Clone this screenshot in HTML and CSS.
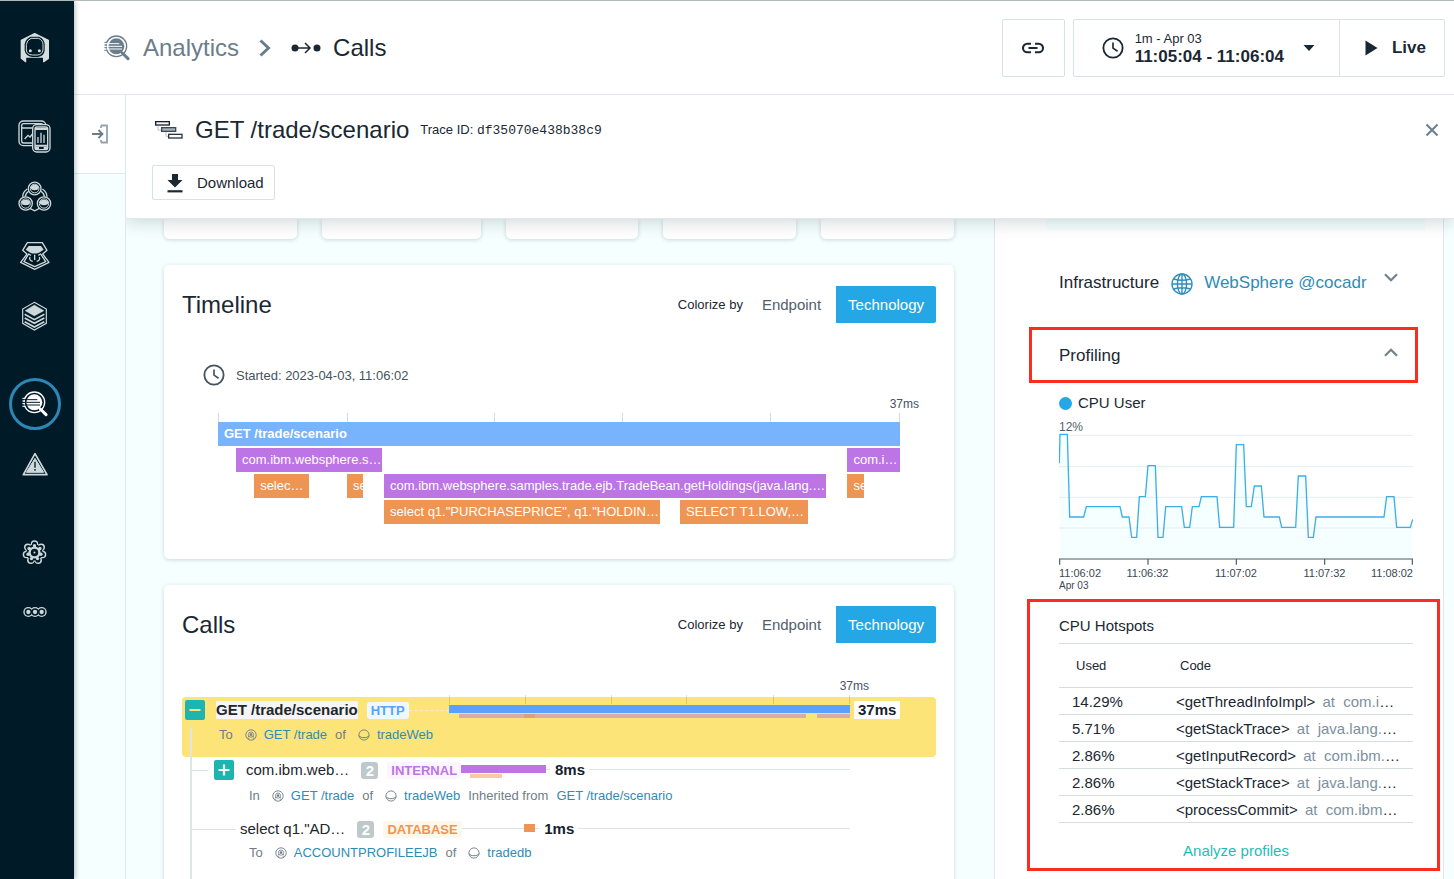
FILE: index.html
```html
<!DOCTYPE html>
<html lang="en">
<head>
<meta charset="utf-8">
<title>Analytics - Calls</title>
<link rel="stylesheet" href="styles.css">
</head>
<body>
<svg class="defs" width="0" height="0" aria-hidden="true">
  <symbol id="i-analytics" viewBox="0 0 78 78">
    <circle cx="37" cy="34" r="31" fill="none" stroke="currentColor" stroke-width="4"/>
    <circle cx="37" cy="34" r="24" fill="currentColor"/>
    <path d="M55 54 72 71" stroke="currentColor" stroke-width="9" stroke-linecap="round"/>
    <path class="cut" d="M0 26H46M0 34H54M0 42H54" fill="none" stroke-width="3"/>
    <path d="M1 22H10M1 30H9M1 38H9M1 46H10" stroke="currentColor" stroke-width="3"/>
  </symbol>
  <symbol id="i-clock" viewBox="0 0 24 24">
    <circle cx="12" cy="12" r="10.5" fill="none" stroke="currentColor" stroke-width="2"/>
    <path d="M12 6v6.2l5 3.4" fill="none" stroke="currentColor" stroke-width="1.8"/>
  </symbol>
  <symbol id="i-endpoint" viewBox="0 0 12 12">
    <circle cx="6" cy="6" r="5.2" fill="none" stroke="currentColor" stroke-width=".9"/>
    <circle cx="6" cy="5.6" r="2.6" fill="none" stroke="currentColor" stroke-width=".8"/>
    <circle cx="6" cy="5.6" r="1.3" fill="currentColor"/>
    <path d="M2.2 9.2h2.2M7.6 9.2h2.2M3 7.8l1.2-.7M9 7.8l-1.2-.7" stroke="currentColor" stroke-width=".8"/>
  </symbol>
  <symbol id="i-service" viewBox="0 0 12 12">
    <circle cx="6" cy="6" r="5.1" fill="none" stroke="currentColor" stroke-width=".9"/>
    <path d="M.9 6.6C2.4 9.4 9.6 9.4 11.1 6.6" fill="none" stroke="currentColor" stroke-width="1"/>
  </symbol>
</svg>

<div class="app">
  <nav class="sidebar" aria-label="Main">
    <a class="logo" href="#" aria-label="Home">
      <svg width="30" height="32" viewBox="60 97 90 96">
        <path d="M104 102 145 122V176L131 186V172H77V186L64 176V122Z" fill="currentColor" stroke="currentColor" stroke-width="4" stroke-linejoin="round"/>
        <path d="M80 175H129V192H80Z" fill="#001a27"/>
        <path d="M92 111H117Q133 118 134 134V152Q132 170 114 172H96Q77 170 74 152V134Q76 118 92 111Z" fill="#001a27"/>
        <path d="M93 116H116Q129 122 129 135V151Q127 165 112 166H97Q80 165 79 151V135Q80 122 93 116Z" fill="none" stroke="currentColor" stroke-width="3"/>
        <circle cx="91" cy="153" r="4.5" fill="currentColor"/><circle cx="118" cy="153" r="4.5" fill="currentColor"/>
      </svg>
    </a>
    <div class="nav-group">
      <a class="nav-item" href="#" aria-label="Websites and mobile apps">
        <svg width="33" height="33" viewBox="56 359 99 99" fill="none" stroke="currentColor">
          <rect x="59" y="362" width="80" height="74" rx="13" stroke-width="4"/>
          <rect x="67" y="370" width="64" height="58" rx="6" stroke-width="4"/>
          <path d="M66 383H104M76 416 86 405 92 410 102 398" stroke-width="4"/>
          <rect x="100" y="373" width="52" height="82" rx="12" fill="#001a27" stroke-width="4"/>
          <rect x="107" y="380" width="38" height="68" rx="6" stroke-width="4"/>
          <path d="M107 386H145M107 436H145M107 443H119M133 443H145" stroke-width="6"/>
          <path d="M116 428V410M125 428V397M134 428V403" stroke-width="4"/>
        </svg>
      </a>
      <a class="nav-item" href="#" aria-label="Applications">
        <svg width="34" height="31" viewBox="54 539 102 92" fill="none" stroke="currentColor">
          <path d="M84 566Q72 574 72 586M125 566Q137 574 137 586" stroke-width="12"/>
          <path d="M84 566Q72 574 72 586M125 566Q137 574 137 586" stroke="#001a27" stroke-width="4"/>
          <path d="M88 620 104 628 120 620" stroke-width="4"/>
          <g fill="#001a27" stroke-width="4"><circle cx="104" cy="561" r="19"/><circle cx="77" cy="606" r="20"/><circle cx="132" cy="606" r="20"/></g>
          <g stroke-width="3"><circle cx="104" cy="561" r="13"/><circle cx="77" cy="606" r="14"/><circle cx="132" cy="606" r="14"/></g>
          <g fill="currentColor" stroke="none"><ellipse cx="104" cy="558" rx="12" ry="8"/><ellipse cx="77" cy="603" rx="13" ry="8"/><ellipse cx="132" cy="603" rx="13" ry="8"/></g>
        </svg>
      </a>
      <a class="nav-item" href="#" aria-label="Platforms">
        <svg width="32" height="30" viewBox="57 726 96 90" fill="none" stroke="currentColor" stroke-linejoin="round">
          <path d="M82 731H127L141 754 128 765 147 790 104 811 62 790 81 765 68 754Z" stroke-width="4"/>
          <path d="M86 741H123L131 752 117 761Q104 766 91 761L77 752Z" fill="currentColor" stroke="none"/>
          <path d="M93 769 86 765 72 788 104 803 137 788 122 765 115 769" stroke-width="4"/>
          <path d="M104 767V783M90 774Q86 784 98 787M118 774Q122 784 110 787" stroke-width="4"/>
        </svg>
      </a>
      <a class="nav-item" href="#" aria-label="Infrastructure">
        <svg width="27" height="30" viewBox="64 908 81 90" fill="none" stroke="currentColor">
          <path d="M104 912 140 932V975L104 995 69 975V932Z" stroke-width="3.5"/>
          <path d="M104 920 133 937 104 953 76 937Z" fill="currentColor"/>
          <path d="M75 948 104 964 134 948M75 959 104 975 134 959M75 970 104 986 134 970" stroke-width="5"/>
        </svg>
      </a>
    </div>
    <div class="nav-group">
      <a class="nav-item nav-item--active" href="#" aria-label="Analytics" aria-current="page">
        <span class="ring"><svg class="glyph" width="26" height="26"><use href="#i-analytics"/></svg></span>
      </a>
      <a class="nav-item" href="#" aria-label="Events">
        <svg width="26" height="24" viewBox="65 333 78 72">
          <path d="M104 338 140 401H69Z" fill="none" stroke="currentColor" stroke-width="5" stroke-linejoin="round"/>
          <path d="M104 352 130 394H78Z" fill="currentColor" stroke="currentColor" stroke-width="3" stroke-linejoin="round"/>
          <path d="M104 362V380M104 384V389" stroke="#001a27" stroke-width="4"/>
        </svg>
      </a>
    </div>
    <div class="nav-group">
      <a class="nav-item" href="#" aria-label="Settings">
        <svg width="25" height="25" viewBox="-37 -37 74 74">
          <g fill="currentColor">
            <circle r="27"/><circle cy="-25" r="11"/><circle cx="20" cy="-16" r="11"/><circle cx="24" cy="6" r="11"/><circle cx="11" cy="23" r="11"/><circle cx="-11" cy="23" r="11"/><circle cx="-24" cy="6" r="11"/><circle cx="-20" cy="-16" r="11"/>
          </g>
          <g fill="#001a27">
            <circle r="24"/><circle cy="-24" r="7.5"/><circle cx="19" cy="-15" r="7.5"/><circle cx="23" cy="6" r="7.5"/><circle cx="10" cy="22" r="7.5"/><circle cx="-10" cy="22" r="7.5"/><circle cx="-23" cy="6" r="7.5"/><circle cx="-19" cy="-15" r="7.5"/>
          </g>
          <g fill="currentColor">
            <circle r="18"/><circle cy="-20" r="5"/><circle cx="16" cy="-12" r="5"/><circle cx="19" cy="5" r="5"/><circle cx="9" cy="18" r="5"/><circle cx="-9" cy="18" r="5"/><circle cx="-19" cy="5" r="5"/><circle cx="-16" cy="-12" r="5"/>
          </g>
          <circle r="11" fill="#001a27"/><circle r="3" fill="currentColor"/>
        </svg>
      </a>
      <a class="nav-item" href="#" aria-label="More">
        <svg width="24" height="12" viewBox="0 0 72 36">
          <g fill="currentColor"><circle cx="16" cy="18" r="15"/><circle cx="36" cy="18" r="15"/><circle cx="56" cy="18" r="15"/></g>
          <g fill="#001a27"><circle cx="16" cy="18" r="11"/><circle cx="36" cy="18" r="11"/><circle cx="56" cy="18" r="11"/></g>
          <g fill="currentColor"><circle cx="16" cy="18" r="6.5"/><circle cx="36" cy="18" r="6.5"/><circle cx="56" cy="18" r="6.5"/></g>
        </svg>
      </a>
    </div>
  </nav>

  <div class="main">
    <header class="topbar">
      <nav class="crumbs" aria-label="Breadcrumb">
        <a class="crumb" href="#"><svg class="glyph" width="26" height="26"><use href="#i-analytics"/></svg>Analytics</a>
        <svg class="crumb-sep" width="14" height="18" viewBox="0 0 14 18"><path d="M2.5 1.5 10.5 9 2.5 16.5" fill="none" stroke="currentColor" stroke-width="3"/></svg>
        <span class="crumb crumb--current">
          <svg width="30" height="12" viewBox="0 0 30 12"><circle cx="4" cy="6" r="3.5" fill="currentColor"/><circle cx="26" cy="6" r="3.5" fill="currentColor"/><path d="M6 6H19M14 1 19 6 14 11" fill="none" stroke="currentColor" stroke-width="1.5"/></svg>
          Calls
        </span>
      </nav>
      <div class="controls">
        <button class="box-btn box-btn--link" type="button" aria-label="Copy link">
          <svg width="24" height="12" viewBox="0 0 24 12"><path d="M10 1.7H6.3a4.3 4.3 0 0 0 0 8.6H10M14 1.7h3.7a4.3 4.3 0 0 1 0 8.6H14M7.5 6h9" fill="none" stroke="currentColor" stroke-width="2.1"/></svg>
        </button>
        <div class="time">
          <button class="time-range" type="button">
            <svg width="22" height="22"><use href="#i-clock"/></svg>
            <span class="time-text"><span class="time-sub">1m - Apr 03</span><strong>11:05:04 - 11:06:04</strong></span>
            <svg width="12" height="6" viewBox="0 0 12 6"><path d="M.5 0h11L6 6z" fill="currentColor"/></svg>
          </button>
          <button class="live" type="button">
            <svg width="13" height="16" viewBox="0 0 13 16"><path d="M.5.5 12.5 8 .5 15.5z" fill="currentColor"/></svg>
            Live
          </button>
        </div>
      </div>
    </header>

    <div class="workspace">
      <aside class="gutter">
        <button class="expand" type="button" aria-label="Expand filters">
          <svg width="18" height="20" viewBox="0 0 18 20"><path d="M1 10H11M7.5 6 11.5 10 7.5 14" fill="none" stroke="currentColor" stroke-width="1.8"/><path d="M10 1.5H16V18.5H10M10 1.5V4M10 18.5V16" fill="none" stroke="#93a3ae" stroke-width="1.8"/></svg>
        </button>
      </aside>

      <section class="panel">
        <header class="panel-head">
          <div class="trace">
            <svg width="28" height="18" viewBox="0 0 84 54" fill="#fff">
              <path d="M9 15V27H20M33 33V46H43" fill="none" stroke="#b8c2c8" stroke-width="3"/>
              <rect x="2" y="2" width="41" height="10" stroke="#15222d" stroke-width="4"/>
              <rect x="20" y="20" width="42" height="11" fill="#a9b4ba" stroke="#3d4952" stroke-width="4"/>
              <rect x="41" y="40" width="40" height="11" stroke="#2b3740" stroke-width="4"/>
            </svg>
            <h1>GET /trade/scenario</h1>
            <p class="trace-id">Trace ID: <code>df35070e438b38c9</code></p>
            <button class="close" type="button" aria-label="Close"><svg width="14" height="14" viewBox="0 0 14 14"><path d="M1.5 1.5 12.5 12.5M12.5 1.5 1.5 12.5" stroke="currentColor" stroke-width="2.2"/></svg></button>
          </div>
          <button class="download" type="button">
            <svg width="16" height="20" viewBox="0 0 16 20"><path d="M5 1H11V7H15.5L8 14.5 .5 7H5Z" fill="currentColor"/><path d="M.5 18.3H15.5" stroke="currentColor" stroke-width="2.2"/></svg>
            Download
          </button>
        </header>

        <div class="content">
          <div class="column">
            <div class="stats"><div class="stat"></div><div class="stat stat--wide"></div><div class="stat"></div><div class="stat"></div><div class="stat"></div></div>

            <section class="card">
              <div class="card-head">
                <h2>Timeline</h2>
                <span class="colorize">Colorize by</span>
                <button class="seg" type="button">Endpoint</button><button class="seg seg--on" type="button" aria-pressed="true">Technology</button>
              </div>
              <p class="started"><svg width="22" height="22"><use href="#i-clock"/></svg>Started: 2023-04-03, 11:06:02</p>
              <div class="flame">
                <p class="scale-max">37ms</p>
                <div class="ticks"><i style="width:18.9%"></i><i style="width:21.7%"></i><i style="width:18.8%"></i><i style="width:21.7%"></i><i style="width:18.9%"></i></div>
                <div class="lane"><span class="call call--http" style="width:100%">GET /trade/scenario</span></div>
                <div class="lane">
                  <span class="call call--internal" style="margin-left:2.65%;width:21.4%">com.ibm.websphere.s…</span>
                  <span class="call call--internal" style="margin-left:68.25%;width:7.7%">com.i…</span>
                </div>
                <div class="lane">
                  <span class="call call--db" style="margin-left:5.3%;width:8%">selec…</span>
                  <span class="call call--db" style="margin-left:5.6%;width:2.4%">se</span>
                  <span class="call call--internal" style="margin-left:3.05%;width:64.8%">com.ibm.websphere.samples.trade.ejb.TradeBean.getHoldings(java.lang.…</span>
                  <span class="call call--db" style="margin-left:3.15%;width:2.4%">se</span>
                </div>
                <div class="lane">
                  <span class="call call--db" style="margin-left:24.35%;width:40.4%">select q1."PURCHASEPRICE", q1."HOLDIN…</span>
                  <span class="call call--db" style="margin-left:3%;width:18.7%">SELECT T1.LOW,…</span>
                </div>
              </div>
            </section>

            <section class="card card--calls">
              <div class="card-head">
                <h2>Calls</h2>
                <span class="colorize">Colorize by</span>
                <button class="seg" type="button">Endpoint</button><button class="seg seg--on" type="button" aria-pressed="true">Technology</button>
              </div>
              <div class="tree-scale">
                <p class="scale-max">37ms</p>
                <div class="ticks"><i style="width:19.1%"></i><i style="width:21.3%"></i><i style="width:18.8%"></i><i style="width:21.7%"></i><i style="width:18.9%"></i></div>
              </div>
              <div class="tree">
                <div class="node node--root">
                  <div class="node-line">
                    <div class="node-label">
                      <button class="fold" type="button" aria-label="Collapse"><svg width="20" height="20" viewBox="0 0 20 20"><path d="M4.5 10H15.5" stroke="#fde478" stroke-width="2"/></svg></button>
                      <strong class="node-name">GET /trade/scenario</strong>
                      <span class="tag tag--http">HTTP</span>
                      <span class="leader"></span>
                    </div>
                    <div class="track">
                      <div class="span" style="width:100%">
                        <div class="bar bar--http"></div>
                        <div class="subs"><i class="sub sub--rose" style="margin-left:2.6%;width:16.1%"></i><i class="sub sub--rust" style="width:2.7%"></i><i class="sub sub--rose" style="width:67.7%"></i><i class="sub sub--rose" style="margin-left:2.7%;width:8.2%"></i></div>
                      </div>
                      <strong class="dur dur--marked">37ms</strong>
                    </div>
                  </div>
                  <p class="meta">To <svg width="12" height="12"><use href="#i-endpoint"/></svg><a href="#">GET /trade</a> of <svg width="12" height="12"><use href="#i-service"/></svg><a href="#">tradeWeb</a></p>
                </div>

                <div class="node node--child">
                  <div class="node-line">
                    <div class="node-label">
                      <span class="branch"></span>
                      <button class="fold" type="button" aria-label="Expand"><svg width="20" height="20" viewBox="0 0 20 20"><path d="M4.5 10H15.5M10 4.5V15.5" stroke="#fff" stroke-width="2.2"/></svg></button>
                      <span class="node-name">com.ibm.web…</span>
                      <span class="count">2</span>
                      <span class="tag tag--internal">INTERNAL</span>
                    </div>
                    <div class="track">
                      <span class="rule" style="width:2.9%"></span>
                      <div class="span" style="width:21.3%">
                        <div class="bar bar--internal"></div>
                        <div class="subs"><i class="sub sub--peach" style="margin-left:11%;width:38%"></i></div>
                      </div>
                      <span class="rule rule--stub"></span><strong class="dur">8ms</strong><span class="rule rule--rest"></span>
                    </div>
                  </div>
                  <p class="meta">In <svg width="12" height="12"><use href="#i-endpoint"/></svg><a href="#">GET /trade</a> of <svg width="12" height="12"><use href="#i-service"/></svg><a href="#">tradeWeb</a> Inherited from <a href="#">GET /trade/scenario</a></p>
                </div>

                <div class="node node--child node--leaf">
                  <div class="node-line">
                    <div class="node-label">
                      <span class="branch"></span>
                      <span class="node-name">select q1."AD…</span>
                      <span class="count">2</span>
                      <span class="tag tag--db">DATABASE</span>
                    </div>
                    <div class="track">
                      <span class="rule" style="width:18.7%"></span>
                      <div class="span" style="width:2.8%"><div class="bar bar--db"></div></div>
                      <span class="rule rule--stub"></span><strong class="dur">1ms</strong><span class="rule rule--rest"></span>
                    </div>
                  </div>
                  <p class="meta">To <svg width="12" height="12"><use href="#i-endpoint"/></svg><a href="#">ACCOUNTPROFILEEJB</a> of <svg width="12" height="12"><use href="#i-service"/></svg><a href="#">tradedb</a></p>
                </div>
              </div>
            </section>
          </div>

          <aside class="details">
            <div class="prev-block"></div>
            <div class="infra">
              <span>Infrastructure</span>
              <svg width="22" height="22" viewBox="0 0 22 22" fill="none" stroke="#2f8fbd" stroke-width="1.4"><circle cx="11" cy="11" r="10"/><ellipse cx="11" cy="11" rx="4.6" ry="10"/><path d="M11 1V21M1 11H21M2.6 6Q11 8.5 19.4 6M2.6 16Q11 13.5 19.4 16"/></svg>
              <a href="#">WebSphere @cocadr</a>
              <button class="chev" type="button" aria-label="Expand infrastructure"><svg width="14" height="9" viewBox="0 0 14 9"><path d="M1 1.2 7 7.2 13 1.2" fill="none" stroke="currentColor" stroke-width="2.2"/></svg></button>
            </div>
            <div class="profiling marked">
              <h3>Profiling</h3>
              <button class="chev" type="button" aria-label="Collapse profiling"><svg width="14" height="9" viewBox="0 0 14 9"><path d="M1 7.8 7 1.8 13 7.8" fill="none" stroke="currentColor" stroke-width="2.2"/></svg></button>
            </div>
            <figure class="chart">
              <figcaption><span class="dot"></span>CPU User</figcaption>
              <p class="ymax">12%</p>
              <svg class="plot" viewBox="147 96 1062 402" preserveAspectRatio="none" role="img" aria-label="CPU user over time">
                <path d="M148 477V190L150 103H172L179 351H221L229 320H330L337 351H357L365 412H380L388 290H406L414 197H436L444 412H459L467 320H515L523 382H539L547 320H567L574 290H621L629 382H671L679 134H701L709 320H724L733 258H754L762 351H808L815 382H857L865 228H887L895 412H910L918 351H1122L1130 290H1152L1160 382H1201L1208 358V477Z" fill="#f5ffff"/>
                <path d="M147 106H1209M147 200H1209M147 292H1209M147 384H1209" stroke="#e3edf1" stroke-width="3"/>
                <path d="M148 190 150 103H172L179 351H221L229 320H330L337 351H357L365 412H380L388 290H406L414 197H436L444 412H459L467 320H515L523 382H539L547 320H567L574 290H621L629 382H671L679 134H701L709 320H724L733 258H754L762 351H808L815 382H857L865 228H887L895 412H910L918 351H1122L1130 290H1152L1160 382H1201L1208 358" fill="none" stroke="#3bb0e8" stroke-width="4"/>
                <path d="M149 494V477H1207V494M414 477V494M679 477V494M944 477V494" fill="none" stroke="#4a5a66" stroke-width="3.5"/>
              </svg>
              <div class="xaxis"><span>11:06:02<small>Apr 03</small></span><span>11:06:32</span><span>11:07:02</span><span>11:07:32</span><span>11:08:02</span></div>
            </figure>
            <section class="hotspots marked">
              <h4>CPU Hotspots</h4>
              <table>
                <thead><tr><th scope="col">Used</th><th scope="col">Code</th></tr></thead>
                <tbody>
                  <tr><td>14.29%</td><td>&lt;getThreadInfoImpl&gt; <span>at&nbsp; com.i</span>…</td></tr>
                  <tr><td>5.71%</td><td>&lt;getStackTrace&gt; <span>at&nbsp; java.lang.</span>…</td></tr>
                  <tr><td>2.86%</td><td>&lt;getInputRecord&gt; <span>at&nbsp; com.ibm.</span>…</td></tr>
                  <tr><td>2.86%</td><td>&lt;getStackTrace&gt; <span>at&nbsp; java.lang.</span>…</td></tr>
                  <tr><td>2.86%</td><td>&lt;processCommit&gt; <span>at&nbsp; com.ibm</span>…</td></tr>
                </tbody>
              </table>
              <a class="analyze" href="#">Analyze profiles</a>
            </section>
          </aside>
        </div>
      </section>
    </div>
  </div>
</div>
</body>
</html>
```
FILE: styles.css
```css
:root {
  --ink: #1a2833;
  --muted: #6b7d8b;
  --line: #dfe9ec;
  --mint: #f5ffff;
  --link: #2f8cb5;
  --teal: #1eb5b0;
  --night: #001a27;
}

* { box-sizing: border-box; }

body {
  margin: 0;
  background: #fff;
  color: var(--ink);
  font-family: "Liberation Sans", Arial, sans-serif;
  font-size: 13px;
}

h1, h2, h3, h4, p, figure { margin: 0; font-weight: normal; }
a { color: var(--link); text-decoration: none; }
svg { display: block; flex: none; }
.defs { position: absolute; }
button { font: inherit; color: inherit; background: none; border: 0; padding: 0; margin: 0; cursor: pointer; }

.app { display: flex; height: 100vh; overflow: hidden; border-top: 1px solid #b0b8b9; }

/* Sidebar */
.sidebar {
  flex: none;
  width: 74px;
  background: var(--night);
  padding-right: 5px;
  position: relative;
  z-index: 5;
  box-shadow: 1px 0 5px rgba(0, 20, 30, .3);
}
.logo { display: flex; height: 94px; align-items: center; justify-content: center; color: #d5dedf; }
.nav-group { padding-top: 11px; }
.nav-group + .nav-group { padding-top: 28px; }
.nav-item { display: flex; height: 60px; align-items: center; justify-content: center; color: #cdd8da; }
.nav-item--active { color: #fff; }
.ring { display: flex; width: 52px; height: 52px; align-items: center; justify-content: center; border: 3px solid #2e86b5; border-radius: 50%; }
.nav-item .glyph { --cut: var(--night); }
.cut { stroke: var(--cut, #fff); }

/* Top bar */
.main { flex: 1; min-width: 0; display: flex; flex-direction: column; }
.topbar {
  flex: none;
  display: flex;
  align-items: center;
  justify-content: space-between;
  height: 94px;
  padding: 0 9px 0 30px;
  border-bottom: 1px solid var(--line);
}
.crumbs { display: flex; align-items: center; gap: 19px; font-size: 24px; }
.crumb { display: flex; align-items: center; gap: 13px; color: var(--muted); }
.crumb--current { color: var(--ink); gap: 12px; }
.crumb-sep { color: var(--muted); }
.controls { display: flex; gap: 8px; }
.box-btn--link { display: flex; align-items: center; justify-content: center; width: 63px; height: 58px; border: 1px solid #d8e1e3; border-radius: 2px; }
.time { display: flex; height: 58px; border: 1px solid #d8e1e3; border-radius: 2px; }
.time-range { display: flex; align-items: center; padding: 0 24px 0 28px; gap: 11px; border-right: 1px solid #d8e1e3; text-align: left; }
.time-range > svg:last-child { margin-left: 8px; }
.time-text { display: flex; flex-direction: column; font-size: 17px; line-height: 18px; }
.time-sub { font-size: 13px; }
.live { display: flex; align-items: center; gap: 14px; padding: 0 18px 0 25px; font-size: 17px; font-weight: bold; }

/* Workspace */
.workspace { flex: 1; min-height: 0; display: flex; background: var(--mint); }
.gutter { flex: none; width: 51px; }
.expand { display: flex; align-items: center; justify-content: center; width: 100%; height: 79px; background: #fff; border-bottom: 1px solid var(--line); color: var(--muted); }
.panel { flex: 1; min-width: 0; display: flex; flex-direction: column; border-left: 1px solid var(--line); overflow: hidden; }
.panel-head {
  flex: none;
  position: relative;
  z-index: 2;
  padding: 20px 15px 18px 26px;
  background: #fff;
  border-bottom: 1px solid var(--line);
  box-shadow: 0 4px 16px rgba(0, 20, 30, .16);
}
.trace { display: flex; align-items: center; height: 30px; padding-left: 3px; }
.trace h1 { font-size: 24px; margin-left: 12px; }
.trace-id { margin-left: 11px; }
.trace-id code { font: 13px "Liberation Mono", monospace; }
.close { margin-left: auto; color: #6f8391; }
.download { display: flex; align-items: center; gap: 14px; height: 35px; margin-top: 20px; padding: 0 10px 0 14px; border: 1px solid #d8e1e3; border-radius: 2px; font-size: 15px; }

.content { flex: 1; min-height: 0; display: flex; align-items: flex-start; overflow: hidden; padding-right: 10px; }
.column { flex: 1; min-width: 0; display: flex; flex-direction: column; gap: 26px; padding: 0 40px 0 38px; }
.stats { display: flex; gap: 25px; }
.stat { flex: 133; height: 20px; background: #fff; border-radius: 0 0 5px 5px; box-shadow: 0 1px 4px rgba(0, 40, 50, .18); }
.stat--wide { flex: 159; }
.card { padding: 21px 18px 35px; background: #fff; border-radius: 5px; box-shadow: 0 1px 4px rgba(0, 40, 50, .18); }
.card-head { display: flex; align-items: center; height: 37px; }
.card-head h2 { flex: 1; font-size: 24px; }
.seg { height: 37px; padding: 0 15px 0 13px; font-size: 15px; color: #52606b; }
.colorize { margin-right: 6px; }
.seg--on { padding: 0 12px; background: #24a7e4; color: #fff; border-radius: 0 2px 2px 0; }

/* Timeline */
.started { display: flex; align-items: center; gap: 11px; margin: 41px 0 0 21px; color: #45535e; }
.flame { margin: 9px 36px 0; }
.scale-max { font-size: 12px; line-height: 18px; color: #45535e; text-align: right; margin-right: -19px; }
.ticks { display: flex; height: 9px; border-right: 1px solid #d3dcdf; }
.ticks i { border-left: 1px solid #d3dcdf; }
.lane { display: flex; margin-bottom: 2px; }
.lane:last-child { margin-bottom: 0; }
.call { flex: none; height: 24px; padding-left: 6px; line-height: 24px; color: #fff; white-space: nowrap; overflow: hidden; }
.call--http { background: #77b4fd; font-weight: bold; }
.call--internal { background: #bd74e4; }
.call--db { background: #ee9553; }

/* Call tree */
.tree-scale { position: relative; z-index: 1; margin: 34px 86px -7px 267px; }
.tree-scale .ticks { border-color: rgba(100, 120, 120, .25); }
.tree-scale .ticks i { border-color: rgba(100, 120, 120, .25); }
.tree { position: relative; min-height: 320px; }
.tree::before { content: ""; position: absolute; left: 8px; top: 30px; bottom: 0; width: 2px; background: #dde5e6; z-index: 1; }
.node--root { height: 60px; padding-top: 3px; background: #fde478; border-radius: 4px; }
.node--child { height: 58px; padding-top: 3px; }
.node--leaf { padding-top: 4px; }
.node-line { display: grid; grid-template-columns: 267px 1fr 86px; height: 20px; }
.node-label { display: flex; align-items: center; min-width: 0; padding-left: 3px; white-space: nowrap; z-index: 1; }
.node-label > * { flex: none; }
.node--child .node-label { padding-left: 9px; }
.fold { width: 20px; height: 20px; background: var(--teal); border-radius: 2px; }
.node-name { margin-left: 12px; font-size: 15px; line-height: 18px; color: #20262b; }
.node--root .node-name { margin-left: 11px; background: #f5f5f5; }
.branch { width: 17px; height: 1px; margin-right: 6px; background: #d9e2e4; }
.node--leaf .branch { width: 45px; margin-right: 4px; }
.node--leaf .node-name { margin-left: 0; }
.count { margin-left: 12px; width: 17px; line-height: 17px; text-align: center; font-weight: bold; font-size: 15px; color: #fff; background: #bdc9cb; border-radius: 3px; }
.tag { margin-left: 9px; padding: 0 4px; line-height: 17px; font-weight: bold; font-size: 13px; border-radius: 3px; }
.tag--http { color: #58a1ff; background: #eef9ff; }
.tag--internal { color: #bd74e4; background: #fcf4ff; }
.tag--db { color: #ee9553; background: #fff7e9; }
.node-label .leader { flex: 1; border-top: 1px dashed #f3ecc4; }
.track { display: flex; align-items: flex-start; white-space: nowrap; min-width: 0; }
.track > * { flex: none; }
.span { padding-top: 5px; }
.bar { height: 8px; }
.bar--http { background: #58a1ff; }
.bar--internal { background: #bd74e4; }
.bar--db { background: #ee9553; }
.subs { display: flex; margin-top: 1px; }
.sub { height: 4px; }
.sub--rose { background: #dfa9a8; }
.sub--rust { background: #e39b7b; }
.sub--peach { background: #f7caa2; }
.rule { height: 1px; margin-top: 9px; background: #d9e4e8; }
.rule--stub { width: 4px; margin-right: 5px; }
.track .rule--rest { flex: 1; margin-left: 4px; }
.dur { font-size: 15px; line-height: 20px; color: #15222d; }
.dur--marked { margin: 1px 0 0 4px; padding: 0 4px; line-height: 18px; background: #fff; }
.meta { display: flex; align-items: center; gap: 8px; margin-top: 6px; padding-left: 37px; line-height: 18px; color: #6f7d88; white-space: nowrap; }
.meta svg { margin-left: 4px; margin-right: -1px; }
.node--child .meta { margin-top: 7px; padding-left: 67px; }
.node--child.node--leaf .meta { margin-top: 5px; }

/* Details */
.details { flex: none; width: 450px; min-height: 100%; padding: 0 3px 0 32px; background: #fff; border: solid var(--line); border-width: 0 1px; }
.prev-block { height: 11px; margin: 0 15px 0 19px; background: var(--mint); }
.infra { display: flex; align-items: flex-start; height: 54px; margin-top: 43px; padding: 0 42px 0 32px; font-size: 17px; line-height: 20px; white-space: nowrap; }
.infra > svg { margin: 0 11px 0 12px; }
.infra .chev { margin-left: auto; }
.chev { color: #6f8391; }
.marked { border: 3px solid #fb2c20; }
.profiling { display: flex; align-items: center; justify-content: space-between; height: 56px; margin: 0 22px 0 2px; padding: 0 17px 0 27px; }
.profiling h3 { font-size: 17px; line-height: 20px; padding-top: 2px; }
.profiling .chev { padding-bottom: 6px; }
.chart { padding: 11px 27px 0 32px; }
.chart figcaption { display: flex; align-items: center; gap: 6px; font-size: 15px; line-height: 18px; }
.dot { width: 13px; height: 13px; border-radius: 50%; background: #24a7e4; }
.ymax { margin-top: 7px; font-size: 12px; line-height: 16px; color: #52606b; }
.plot { width: 100%; height: 134px; margin-top: -3px; }
.xaxis { display: grid; grid-template-columns: 1fr 2fr 2fr 2fr 1fr; font-size: 11px; line-height: 14px; color: #3a4852; text-align: center; }
.xaxis span:first-child { text-align: left; }
.xaxis span:last-child { text-align: right; }
.xaxis small { display: block; font-size: 10px; line-height: 12px; }
.hotspots { margin-top: 7px; padding: 14px 24px 8px 29px; font-size: 15px; }
.hotspots h4 { font-size: 15px; line-height: 20px; }
table { width: 100%; margin-top: 7px; border-collapse: collapse; table-layout: fixed; border-top: 1px solid #d5dedf; }
th { height: 44px; padding: 0 0 0 17px; font-size: 13px; font-weight: normal; text-align: left; }
th:first-child { width: 104px; }
tr { border-bottom: 1px solid #d5dedf; }
td { height: 27px; padding: 0 0 0 13px; white-space: nowrap; }
td span { margin-left: 3px; color: #7d90a0; }
.analyze { display: block; margin-top: 19px; line-height: 18px; text-align: center; color: #1fbdb8; }
```
